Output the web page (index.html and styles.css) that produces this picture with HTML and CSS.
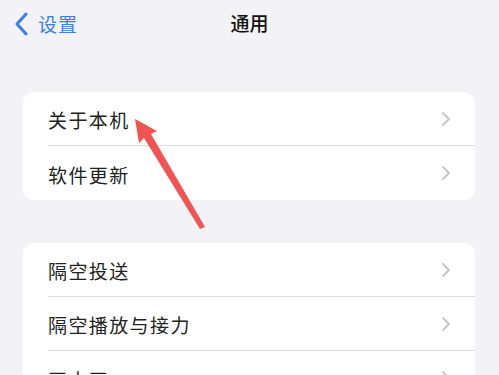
FILE: index.html
```html
<!DOCTYPE html>
<html lang="zh">
<head>
<meta charset="utf-8">
<link rel="stylesheet" href="styles.css">
</head>
<body>
<div class="nav">
  <div class="back">
    <svg class="back-icon" width="14" height="24" viewBox="0 0 14 24"><path d="M12 2 L3 12 L12 22" fill="none" stroke="#3a7ef0" stroke-width="3" stroke-linecap="round" stroke-linejoin="round"/></svg>
    <span>设置</span>
  </div>
  <div class="title">通用</div>
</div>
<div class="group">
  <div class="row"><span>关于本机</span><svg class="chev" width="10" height="16" viewBox="0 0 10 16"><path d="M2 2 L8 8 L2 14" fill="none" stroke="#c4c4c7" stroke-width="1.8" stroke-linecap="round" stroke-linejoin="round"/></svg></div>
  <div class="row"><span>软件更新</span><svg class="chev" width="10" height="16" viewBox="0 0 10 16"><path d="M2 2 L8 8 L2 14" fill="none" stroke="#c4c4c7" stroke-width="1.8" stroke-linecap="round" stroke-linejoin="round"/></svg></div>
</div>
<div class="group">
  <div class="row"><span>隔空投送</span><svg class="chev" width="10" height="16" viewBox="0 0 10 16"><path d="M2 2 L8 8 L2 14" fill="none" stroke="#c4c4c7" stroke-width="1.8" stroke-linecap="round" stroke-linejoin="round"/></svg></div>
  <div class="row"><span>隔空播放与接力</span><svg class="chev" width="10" height="16" viewBox="0 0 10 16"><path d="M2 2 L8 8 L2 14" fill="none" stroke="#c4c4c7" stroke-width="1.8" stroke-linecap="round" stroke-linejoin="round"/></svg></div>
  <div class="row"><span>画中画</span><svg class="chev" width="10" height="16" viewBox="0 0 10 16"><path d="M2 2 L8 8 L2 14" fill="none" stroke="#c4c4c7" stroke-width="1.8" stroke-linecap="round" stroke-linejoin="round"/></svg></div>
</div>
<svg class="arrow" width="499" height="375" viewBox="0 0 499 375"><polygon points="135,119 157,131 151,134 205,227 200,229 144,138 139,143" fill="#f25454"/></svg>
</body>
</html>
```
FILE: styles.css
```css
html, body {
  margin: 0;
  padding: 0;
  background: #f2f2f7;
  width: 499px;
  height: 375px;
  overflow: hidden;
  font-family: "Noto Sans CJK SC", "Noto Sans", sans-serif;
  color: #222;
}
.nav {
  position: relative;
  height: 46px;
  display: flex;
  align-items: center;
  justify-content: center;
}
.back {
  position: absolute;
  left: 14px;
  top: 10px;
  display: flex;
  align-items: center;
  gap: 10px;
  color: #3a7ef0;
  font-size: 19px;
  letter-spacing: 1px;
}
.title {
  font-size: 19px;
  font-weight: 500;
  color: #111;
  margin-top: -2px;
}
.group {
  background: #fff;
  border-radius: 11px;
  margin: 46px 24px 0 23px;
  overflow: hidden;
}
.group + .group {
  margin-top: 43px;
}
.row {
  height: 54px;
  margin-left: 25px;
  padding-right: 24px;
  display: flex;
  align-items: center;
  justify-content: space-between;
  font-size: 19px;
  border-bottom: 1px solid #dcdce0;
  box-sizing: border-box;
}
.row:last-child {
  border-bottom: none;
}
.row span {
  letter-spacing: 1.4px;
  margin-top: 2px;
}
.arrow {
  position: absolute;
  left: 0;
  top: 0;
  pointer-events: none;
}
```
